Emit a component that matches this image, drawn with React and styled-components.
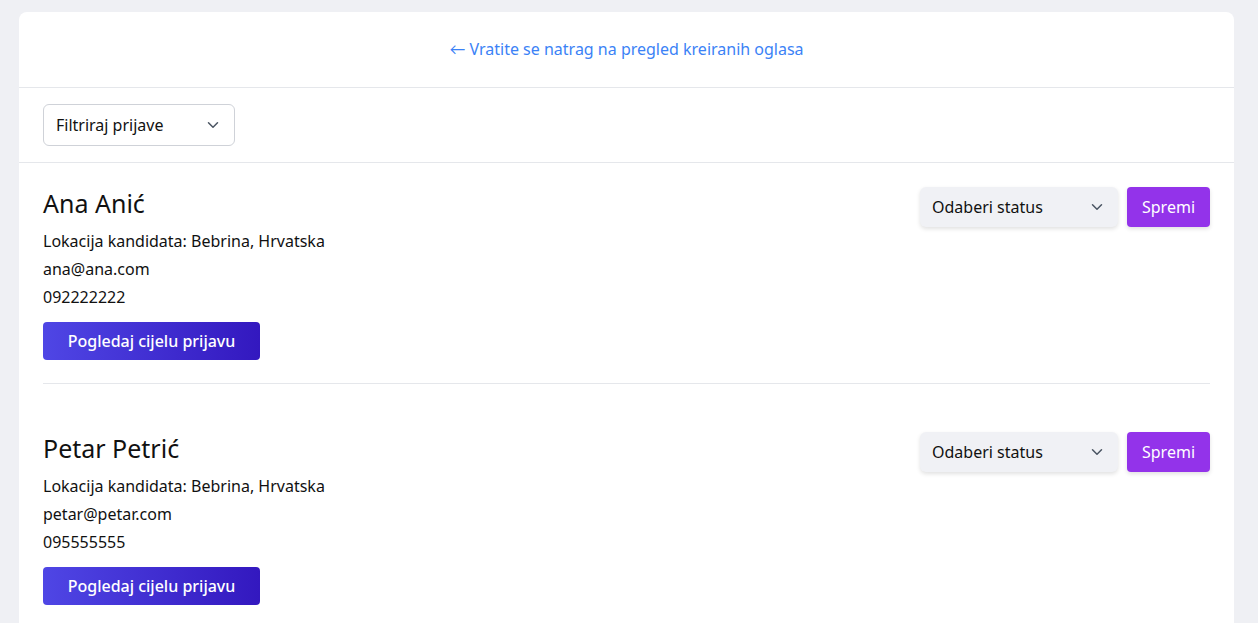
import React from "react";
import styled, { createGlobalStyle } from "styled-components";

const Global = createGlobalStyle`
  * { box-sizing: border-box; }
  body {
    margin: 0;
    background: #eff0f4;
    font-family: "Noto Sans", Lato, sans-serif;
    color: #111;
  }
`;

const Page = styled.div`
  padding: 12px 24px 0 19px;
  min-height: 623px;
`;

const Card = styled.div`
  background: #fff;
  border-radius: 8px 8px 0 0;
  min-height: 640px;
`;

const Header = styled.div`
  height: 76px;
  display: flex;
  align-items: center;
  justify-content: center;
  border-bottom: 1px solid #e5e7eb;
  padding-bottom: 2px;
`;

const BackLink = styled.a`
  color: #3b82f6;
  font-size: 16px;
  text-decoration: none;
`;

const FilterBar = styled.div`
  padding: 16px 24px;
  border-bottom: 1px solid #e5e7eb;
`;

const SelectBox = styled.div`
  display: flex;
  align-items: center;
  justify-content: space-between;
  width: ${(p) => p.$width}px;
  height: ${(p) => p.$height}px;
  padding: 0 12px 0 12px;
  border-radius: 6px;
  font-size: 16px;
  background: ${(p) => (p.$filled ? "#f0f1f5" : "#fff")};
  border: ${(p) => (p.$filled ? "none" : "1px solid #cfd2d8")};
  box-shadow: ${(p) => (p.$filled ? "0 2px 4px rgba(0,0,0,0.12)" : "none")};
  color: #111;
`;

const List = styled.div`
  padding: 0 24px;
`;

const Item = styled.div`
  display: flex;
  justify-content: space-between;
  align-items: flex-start;
  padding: ${(p) => (p.$first ? "24px" : "48px")} 0 23px;
  border-bottom: ${(p) => (p.$last ? "none" : "1px solid #e5e7eb")};
`;

const Info = styled.div`
  display: flex;
  flex-direction: column;
`;

const Name = styled.h2`
  margin: 0 0 8px;
  font-size: 25px;
  font-weight: 400;
  line-height: 32px;
`;

const Line = styled.div`
  font-size: 16px;
  line-height: 28px;
`;

const ViewButton = styled.button`
  margin-top: 11px;
  width: 217px;
  height: 38px;
  border: none;
  border-radius: 4px;
  color: #fff;
  font-family: inherit;
  font-size: 16px;
  font-weight: 500;
  background: linear-gradient(90deg, #4f46e5, #3318bf);
`;

const Actions = styled.div`
  display: flex;
  gap: 9px;
`;

const SaveButton = styled.button`
  width: 83px;
  height: 40px;
  border: none;
  border-radius: 4px;
  background: #9333ea;
  color: #fff;
  font-family: inherit;
  font-size: 16px;
  box-shadow: 0 2px 4px rgba(0,0,0,0.12);
`;

const Chevron = () => (
  <svg width="18" height="18" viewBox="0 0 24 24" fill="none" stroke="#4b5563" strokeWidth="2" strokeLinecap="round" strokeLinejoin="round">
    <path d="M6 9l6 6 6-6" />
  </svg>
);

const candidates = [
  { name: "Ana Anić", email: "ana@ana.com", phone: "092222222" },
  { name: "Petar Petrić", email: "petar@petar.com", phone: "095555555" },
];

export default function App() {
  return (
    <Page>
      <Global />
      <Card>
        <Header>
          <BackLink href="#">← Vratite se natrag na pregled kreiranih oglasa</BackLink>
        </Header>
        <FilterBar>
          <SelectBox $width={192} $height={42}>
            Filtriraj prijave
            <Chevron />
          </SelectBox>
        </FilterBar>
        <List>
          {candidates.map((c, i) => (
            <Item key={c.name} $first={i === 0} $last={i === candidates.length - 1}>
              <Info>
                <Name>{c.name}</Name>
                <Line>Lokacija kandidata: Bebrina, Hrvatska</Line>
                <Line>{c.email}</Line>
                <Line>{c.phone}</Line>
                <ViewButton>Pogledaj cijelu prijavu</ViewButton>
              </Info>
              <Actions>
                <SelectBox $width={198} $height={40} $filled>
                  Odaberi status
                  <Chevron />
                </SelectBox>
                <SaveButton>Spremi</SaveButton>
              </Actions>
            </Item>
          ))}
        </List>
      </Card>
    </Page>
  );
}
